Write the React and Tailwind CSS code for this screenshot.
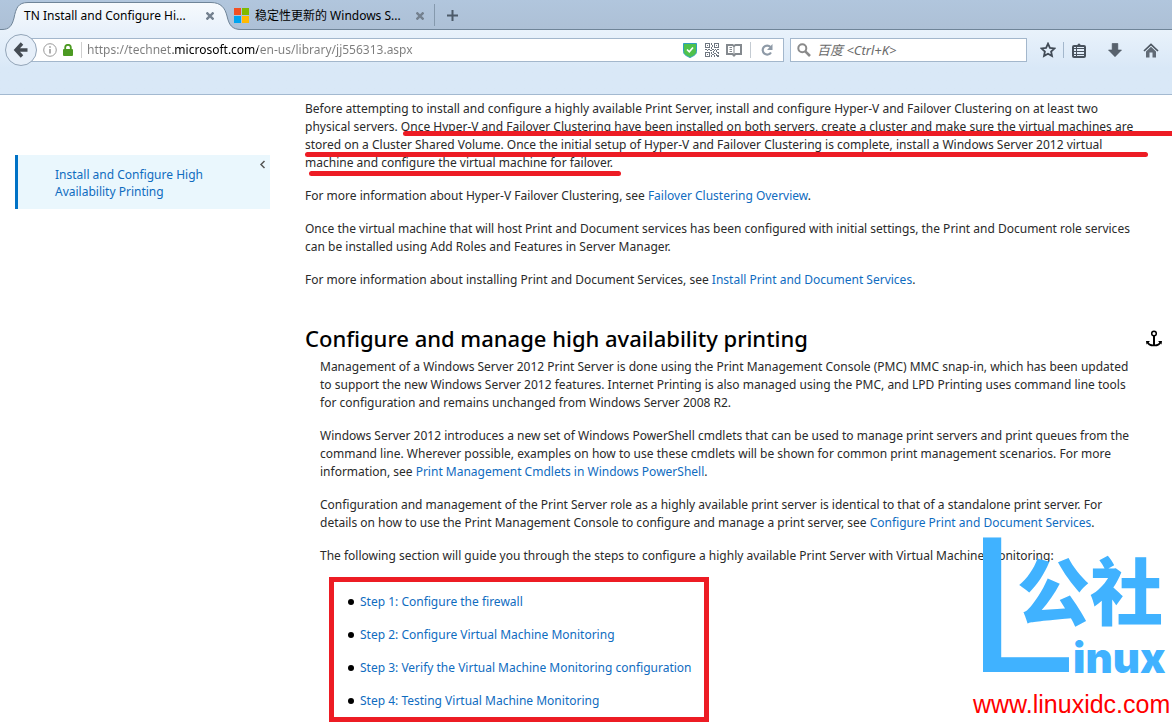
import React from 'react';

const TabShape = () => (
  <svg className="absolute left-0 top-0 pointer-events-none" width="246" height="31" viewBox="0 0 246 31" fill="none">
    <defs>
      <linearGradient id="tabFill" x1="0" y1="0" x2="0" y2="1">
        <stop offset="0" stopColor="#f7fafd" />
        <stop offset="1" stopColor="#e8f1fb" />
      </linearGradient>
    </defs>
    <path d="M0 31V29.5H2C9 29.5 12 26 14 18C16 8 18 2.500 28 2.500H211C221 2.500 225 8 227 16C229 25 232 29.500 241 29.500H246V31Z" fill="url(#tabFill)" />
    <path d="M0 29.500H2C9 29.500 12 26 14 18C16 8 18 2.500 28 2.500H211C221 2.500 225 8 227 16C229 25 232 29.500 241 29.500H246" stroke="#6f8498" />
  </svg>
);

const CloseIcon = () => (
  <svg width="8" height="8" viewBox="0 0 8 8" stroke="#74818f" strokeWidth="2.400">
    <path d="M.5.5l7 7M7.500.5l-7 7" />
  </svg>
);

const BackIcon = () => (
  <svg width="16" height="16" viewBox="0 0 16 16" fill="none" stroke="#454c54" strokeWidth="3.400">
    <path d="M9 1.500L3 8l6 6.500M3 8H14.500" />
  </svg>
);

const InfoIcon = () => (
  <svg className="shrink-0" width="14" height="14" viewBox="0 0 14 14" fill="none" stroke="#9a9a9a">
    <circle cx="7" cy="7" r="6.300" />
    <path d="M7 6v4.500M7 3.200v1.600" strokeWidth="1.600" />
  </svg>
);

const LockIcon = () => (
  <svg className="shrink-0" width="10" height="12" viewBox="0 0 10 12">
    <path d="M2.200 6V3.600a2.800 2.800 0 0 1 5.600 0V6" fill="none" stroke="#4c9a22" strokeWidth="1.800" />
    <rect y="5" width="10" height="7" rx="1" fill="#4c9a22" />
  </svg>
);

const ShieldIcon = () => (
  <svg width="14" height="15" viewBox="0 0 14 15">
    <path d="M.5.5h13v8c0 3-3 4.500-6.500 6C3.500 13 .5 11.500.5 8.500Z" fill="#4fc24c" stroke="#2f9fc0" />
    <path d="M4 6.500l2.300 2.300L10 4.500" fill="none" stroke="#fff" strokeWidth="1.700" />
  </svg>
);

const QrIcon = () => (
  <svg width="14" height="14" viewBox="0 0 14 14" fill="#6e7680" shapeRendering="crispEdges">
    <path fillRule="evenodd" d="M0 0h5v5H0zM1 1v3h3V1zM9 0h5v5H9zM10 1v3h3V1zM0 9h5v5H0zM1 10v3h3v-3z" />
    <path d="M2 2h1v1H2zM11 2h1v1h-1zM2 11h1v1H2zM6 0h1v2H6zM7 2h1v2H7zM6 4h1v2H6zM0 6h2v1H0zM3 6h2v1H3zM2 7h1v1H2zM5 7h2v1H5zM7 6h2v1H7zM10 6h1v1h-1zM12 6h2v1h-2zM9 7h1v1H9zM11 7h1v2h-1zM8 8h1v2H8zM6 9h1v2H6zM7 11h2v1H7zM6 12h1v2H6zM9 10h2v1H9zM12 9h2v1h-2zM11 11h1v2h-1zM9 12h1v2H9zM12 12h2v2h-2zM13 10h1v1h-1z" />
  </svg>
);

const ReaderIcon = () => (
  <svg width="16" height="14" viewBox="0 0 16 14" fill="none" stroke="#84898e">
    <path d="M1 2h5.500L8 3l1.500-1H15v9H9.500L8 12.500 6.500 11H1Z" strokeWidth="2" />
    <path d="M8 3v9M3.500 4.500H6M3.500 6.500H6M3.500 8.500H6" />
  </svg>
);

const ReloadIcon = () => (
  <svg width="12" height="12" viewBox="0 0 12 12">
    <path d="M9.500 3A4.500 4.500 0 1 0 10 8.500" fill="none" stroke="#8e9aa7" strokeWidth="2.200" />
    <path d="M11.500 0v6H6Z" fill="#8e9aa7" />
  </svg>
);

const SearchIcon = () => (
  <svg className="shrink-0" width="14" height="14" viewBox="0 0 14 14" fill="none" stroke="#8a8a8a">
    <circle cx="5.300" cy="5.300" r="4" strokeWidth="2" />
    <path d="M8.300 8.300l4.700 4.700" strokeWidth="2.600" />
  </svg>
);

const StarIcon = () => (
  <svg width="16" height="16" viewBox="0 0 16 16" fill="none" stroke="#414b56" strokeWidth="1.800">
    <path d="M8 1.700l1.900 4.200 4.600.5-3.400 3.100.9 4.600L8 11.800l-4 2.300.9-4.600L1.500 6.400l4.600-.5Z" />
  </svg>
);

const ClipboardIcon = () => (
  <svg width="14" height="15" viewBox="0 0 14 15">
    <path d="M3.500 3V2H5.500a1.500 1.500 0 0 1 3 0h2v1Z" fill="#48525d" />
    <rect x="1" y="3" width="12" height="11" rx="1" fill="none" stroke="#48525d" strokeWidth="2" />
    <path d="M2 5.500h10M2 8.500h10M2 11.500h10" stroke="#48525d" />
    <path d="M4.500 4v10" stroke="#48525d" />
  </svg>
);

const DownloadIcon = () => (
  <svg width="14" height="14" viewBox="0 0 14 14">
    <path d="M4.200.5h5.600V7H13.500L7 13.700.5 7h3.700Z" fill="#58626d" stroke="#47515c" strokeWidth=".6" />
  </svg>
);

const HomeIcon = () => (
  <svg width="16" height="15" viewBox="0 0 16 15">
    <path d="M1 8l7-6.500L15 8" fill="none" stroke="#4c5661" strokeWidth="1.700" />
    <path d="M3 8.500l5-4.700 5 4.700V14.500H9.500V9.500h-3v5H3Z" fill="#616b76" />
  </svg>
);

const AnchorIcon = () => (
  <svg width="16" height="17" viewBox="0 0 16 17" fill="none" stroke="#000">
    <circle cx="8" cy="3.500" r="2.300" strokeWidth="1.500" />
    <path d="M8 6v10" strokeWidth="2" />
    <path d="M1.500 11.500c.5 3 3 4 6.500 4s6-1 6.500-4" strokeWidth="1.600" />
    <path d="M0 11h4l-3.500 3.500ZM16 11h-4l3.500 3.500Z" fill="#000" stroke="none" />
  </svg>
);

const Link = ({ children }) => (
  <a href="#" className="text-[#0f6cbf]">{children}</a>
);

const steps = [
  'Step 1: Configure the firewall',
  'Step 2: Configure Virtual Machine Monitoring',
  'Step 3: Verify the Virtual Machine Monitoring configuration',
  'Step 4: Testing Virtual Machine Monitoring',
];

const TabStrip = () => (
  <div className="flex h-[30px] bg-linear-to-b from-[#b1c6dd] to-[#adc0d6] border-b border-[#6f8498] text-black">
    <div className="relative w-[234px] h-[30px] shrink-0">
      <TabShape />
      <div className="relative flex items-center h-full pl-6 pt-px">
        <span className="w-[182px] whitespace-nowrap">TN Install and Configure Hi...</span>
        <button aria-label="Close tab"><CloseIcon /></button>
      </div>
    </div>
    <div className="relative flex items-center w-[200px] shrink-0 h-[30px] pt-px">
      <span className="grid grid-cols-2 gap-px w-[15px] h-[15px] mr-1.5">
        <span className="bg-[#f25022]" />
        <span className="bg-[#7fba00]" />
        <span className="bg-[#00a4ef]" />
        <span className="bg-[#ffb900]" />
      </span>
      <span className="w-[161px] whitespace-nowrap">稳定性更新的 Windows S...</span>
      <button aria-label="Close tab"><CloseIcon /></button>
    </div>
    <span className="w-px h-[22px] mt-1 bg-[#8599ad]" />
    <button className="ml-3 mt-px" aria-label="New tab">
      <svg width="11" height="11" viewBox="0 0 11 11" stroke="#4d5b69" strokeWidth="2">
        <path d="M5.500 0v11M0 5.500h11" />
      </svg>
    </button>
  </div>
);

const Toolbar = () => (
  <div className="flex items-start h-[65px] pt-1 pl-[5px] pr-[13px] bg-linear-to-b from-[#e9f2fb] to-[#d9e8f7] to-60% border-b border-[#a3b9d0]">
    <button className="relative z-10 flex items-center justify-center w-8 h-8 shrink-0 rounded-full border border-[#93a5b8] bg-[#e6eff9]" aria-label="Back">
      <BackIcon />
    </button>
    <div className="flex items-center flex-1 min-w-0 h-6 mt-1 -ml-3 pl-[17px] bg-white border border-[#a3b7cc]">
      <InfoIcon />
      <span className="w-1.5 shrink-0" />
      <LockIcon />
      <span className="w-px h-4 ml-2 mr-[5px] bg-[#cfcfcf] shrink-0" />
      <input
        aria-label="Address"
        className="flex-1 min-w-0 text-transparent bg-clip-text outline-none bg-[linear-gradient(90deg,#7c7c7c_86px,#000_86px,#000_171px,#7c7c7c_171px)]"
        defaultValue="https://technet.microsoft.com/en-us/library/jj556313.aspx"
      />
      <button className="mr-2" aria-label="Site safety"><ShieldIcon /></button>
      <button className="mr-[7px]" aria-label="QR code"><QrIcon /></button>
      <button aria-label="Reader view"><ReaderIcon /></button>
      <span className="w-px h-4 mx-2 bg-[#c4cbd2]" />
      <button className="ml-0.5 mr-2.5" aria-label="Reload"><ReloadIcon /></button>
    </div>
    <div className="flex items-center w-[237px] h-6 mt-1 ml-1.5 pl-1.5 gap-1.5 shrink-0 bg-white border border-[#a3b7cc]">
      <SearchIcon />
      <input
        aria-label="Search"
        className="flex-1 min-w-0 text-[13px] italic outline-none placeholder:text-[#6a6a6a]"
        placeholder="百度 <Ctrl+K>"
      />
    </div>
    <div className="flex items-center h-6 mt-1 ml-[13px] shrink-0">
      <button aria-label="Bookmark this page"><StarIcon /></button>
      <span className="w-px h-4 ml-[7px] mr-2 bg-[#a3b7cc]" />
      <button aria-label="Bookmarks"><ClipboardIcon /></button>
      <button className="ml-[22px]" aria-label="Downloads"><DownloadIcon /></button>
      <button className="ml-[21px]" aria-label="Home"><HomeIcon /></button>
    </div>
  </div>
);

const Watermark = () => (
  <div className="absolute right-0 bottom-0 w-[201px] h-[196px] text-[#40b2ff] pointer-events-none select-none">
    <span className="absolute -left-[4px] -top-[40px] text-[195px] leading-[224px] font-['Liberation_Sans',sans-serif]">L</span>
    <span className="absolute left-[46px] top-[15px] text-[73px] leading-[80px] font-black whitespace-nowrap font-['Noto_Sans_CJK_SC',sans-serif]">公社</span>
    <span className="absolute left-[102px] top-[101px] text-[42px] leading-[50px] font-black font-['Inter',sans-serif]">inux</span>
    <span className="absolute left-[2px] top-[154px] text-[25px] leading-[36px] text-[#ff0000] whitespace-nowrap font-['Liberation_Sans',sans-serif]">www.linuxidc.com</span>
  </div>
);

const App = () => {
  return (
    <div className="relative min-h-screen overflow-hidden bg-white text-[#2a2a2a] text-xs leading-[18px] font-['Noto_Sans','Noto_Sans_CJK_SC',sans-serif]">
      <TabStrip />
      <Toolbar />

      <div className="flex items-start pl-[15px]">
        {/* Side navigation */}
        <nav className="flex justify-between w-[255px] shrink-0 mt-[60px] pt-[11px] pb-[9px] pl-[37px] pr-1 bg-[#eaf7fd] border-l-3 border-[#0072c6] leading-[17px]">
          <a href="#" className="text-[#0f6cbf]">
            Install and Configure High<br />Availability Printing
          </a>
          <button className="self-start -mt-1.5" aria-label="Collapse">
            <svg width="7" height="9" viewBox="0 0 7 9" fill="none" stroke="#555" strokeWidth="1.500">
              <path d="M5.500 1L2 4.500 5.500 8" />
            </svg>
          </button>
        </nav>

        {/* Article */}
        <main className="flex-1 min-w-0 pl-[35px] pt-[5px] whitespace-nowrap">
          <div className="relative mb-[15px]">
            <p>
              Before attempting to install and configure a highly available Print Server, install and configure Hyper-V and Failover Clustering on at least two<br />
              physical servers. Once Hyper-V and Failover Clustering have been installed on both servers, create a cluster and make sure the virtual machines are<br />
              stored on a Cluster Shared Volume. Once the initial setup of Hyper-V and Failover Clustering is complete, install a Windows Server 2012 virtual<br />
              machine and configure the virtual machine for failover.
            </p>
            {/* Marker strokes */}
            <span className="absolute left-[98px] right-0 top-[31px] h-[5px] rounded-l-full bg-[#ed1c24]" />
            <span className="absolute left-0 right-6 top-[52px] h-[5px] rounded-full bg-[#ed1c24]" />
            <span className="absolute left-1 w-[312px] top-[71px] h-[5px] rounded-full bg-[#ed1c24]" />
          </div>
          <p className="mb-[15px]">
            For more information about Hyper-V Failover Clustering, see <Link>Failover Clustering Overview</Link>.
          </p>
          <p className="mb-[15px]">
            Once the virtual machine that will host Print and Document services has been configured with initial settings, the Print and Document role services<br />
            can be installed using Add Roles and Features in Server Manager.
          </p>
          <p>
            For more information about installing Print and Document Services, see <Link>Install Print and Document Services</Link>.
          </p>

          <div className="flex items-center justify-between mt-[31px] mb-0.5 pr-[10px]">
            <h2 className="text-[22px] leading-9 font-medium text-black">Configure and manage high availability printing</h2>
            <a href="#" aria-label="Anchor"><AnchorIcon /></a>
          </div>

          <div className="pl-[15px]">
            <p className="mb-[15px]">
              Management of a Windows Server 2012 Print Server is done using the Print Management Console (PMC) MMC snap-in, which has been updated<br />
              to support the new Windows Server 2012 features. Internet Printing is also managed using the PMC, and LPD Printing uses command line tools<br />
              for configuration and remains unchanged from Windows Server 2008 R2.
            </p>
            <p className="mb-[15px]">
              Windows Server 2012 introduces a new set of Windows PowerShell cmdlets that can be used to manage print servers and print queues from the<br />
              command line. Wherever possible, examples on how to use these cmdlets will be shown for common print management scenarios. For more<br />
              information, see <Link>Print Management Cmdlets in Windows PowerShell</Link>.
            </p>
            <p className="mb-[15px]">
              Configuration and management of the Print Server role as a highly available print server is identical to that of a standalone print server. For<br />
              details on how to use the Print Management Console to configure and manage a print server, see <Link>Configure Print and Document Services</Link>.
            </p>
            <p>
              The following section will guide you through the steps to configure a highly available Print Server with Virtual Machine Monitoring:
            </p>

            <div className="w-[380px] mt-3 ml-[9px] pt-[11px] pb-[7px] pl-3.5 border-5 border-[#ed1c24]">
              <ul className="flex flex-col gap-[15px]">
                {steps.map((step) => (
                  <li key={step} className="flex items-center gap-1.5">
                    <span className="w-1.5 h-1.5 shrink-0 rounded-full bg-black" />
                    <Link>{step}</Link>
                  </li>
                ))}
              </ul>
            </div>
          </div>
        </main>
      </div>

      <Watermark />
    </div>
  );
};

export default App;
